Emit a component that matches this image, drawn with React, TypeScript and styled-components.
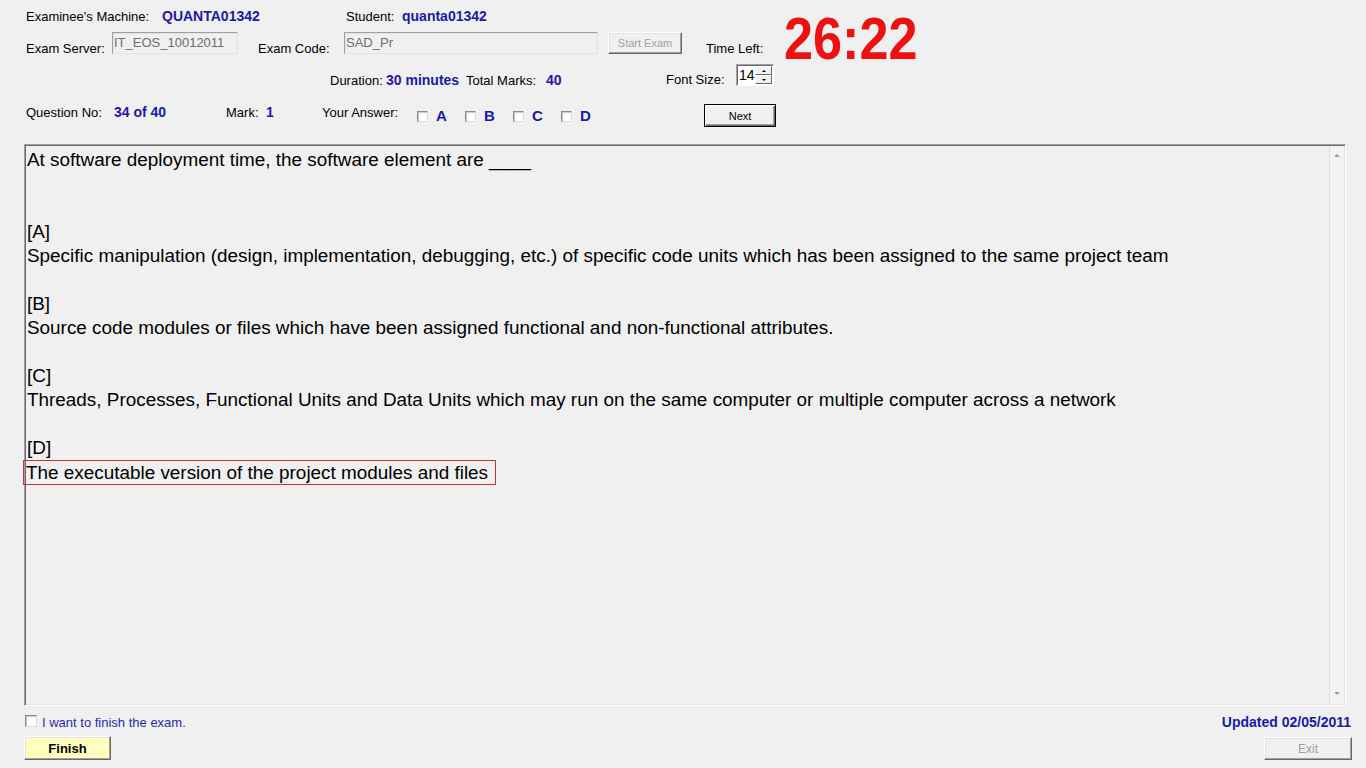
import React from "react";
import styled, { createGlobalStyle } from "styled-components";

const GlobalStyle = createGlobalStyle`
  html, body { margin: 0; padding: 0; background: #f0f0f0; }
  body { font-family: "Liberation Sans", Arial, sans-serif; }
  #root { width: 1366px; height: 768px; }
`;

const BLUE = "#1a1aa8";

const Page = styled.div`
  width: 1366px;
  height: 768px;
  box-sizing: border-box;
  padding: 0 14px 0 24px;
  display: flex;
  flex-direction: column;
  background: #f0f0f0;
  color: #000;
  overflow: hidden;
`;

const TopSection = styled.div`
  display: flex;
  height: 56px;
  padding-left: 2px;
  align-items: flex-start;
`;

const InfoColumn = styled.div`
  display: flex;
  flex-direction: column;
  width: 656px;
  flex: none;
`;

const Row = styled.div<{ $top: number; $h: number; $pl?: number }>`
  display: flex;
  align-items: flex-start;
  margin-top: ${(p) => p.$top}px;
  height: ${(p) => p.$h}px;
  padding-left: ${(p) => p.$pl ?? 0}px;
  flex: none;
`;

const Label = styled.span<{ $w?: number; $mt?: number }>`
  display: block;
  flex: none;
  width: ${(p) => (p.$w ? `${p.$w}px` : "auto")};
  margin-top: ${(p) => p.$mt ?? 0}px;
  font-size: 13px;
  line-height: 15px;
  white-space: nowrap;
  color: #000;
`;

const Value = styled.span<{ $w?: number; $mt?: number }>`
  display: block;
  flex: none;
  width: ${(p) => (p.$w ? `${p.$w}px` : "auto")};
  margin-top: ${(p) => p.$mt ?? 0}px;
  font-size: 14px;
  font-weight: bold;
  line-height: 15px;
  white-space: nowrap;
  color: ${BLUE};
`;

const Spacer = styled.div<{ $w: number }>`
  width: ${(p) => p.$w}px;
  flex: none;
`;

const Field = styled.div<{ $w: number }>`
  box-sizing: border-box;
  width: ${(p) => p.$w}px;
  height: 22px;
  flex: none;
  padding: 2px 2px 0 1px;
  border: 1px solid;
  border-color: #a0a0a0 #e3e3e3 #e3e3e3 #a0a0a0;
  box-shadow: inset 1px 1px #e3e3e3;
  background: #f0f0f0;
  font-size: 13px;
  line-height: 15px;
  color: #6d6d6d;
  white-space: nowrap;
  overflow: hidden;
`;

const WinButton = styled.button<{
  $w: number;
  $h: number;
  $mt?: number;
  $ml?: number;
  $fs?: number;
  $bold?: boolean;
  $bg?: string;
  $default?: boolean;
}>`
  box-sizing: border-box;
  flex: none;
  width: ${(p) => p.$w}px;
  height: ${(p) => p.$h}px;
  margin: ${(p) => p.$mt ?? 0}px 0 0 ${(p) => p.$ml ?? 0}px;
  padding: 0;
  font-family: "Liberation Sans", Arial, sans-serif;
  font-size: ${(p) => p.$fs ?? 11}px;
  font-weight: ${(p) => (p.$bold ? "bold" : "normal")};
  color: ${(p) => (p.disabled ? "#a0a0a0" : "#000")};
  background: ${(p) => p.$bg ?? "#f0f0f0"};
  border: 1px solid;
  border-color: ${(p) =>
    p.$default ? "#000" : "#ffffff #696969 #696969 #ffffff"};
  box-shadow: ${(p) =>
    p.$default
      ? "inset 1px 1px #ffffff, inset -1px -1px #696969, inset -2px -2px #a0a0a0"
      : "inset -1px -1px #a0a0a0, inset 1px 1px #e3e3e3"};
  cursor: default;
`;

const TimeLeftLabel = styled(Label)`
  margin-left: 24px;
  margin-top: 41px;
`;

const Timer = styled.div`
  flex: none;
  width: 133px;
  margin-left: 21px;
  margin-top: 15px;
  font-size: 60px;
  font-weight: bold;
  line-height: 48px;
  color: #ee1111;
  white-space: nowrap;
  transform: scaleX(0.87);
  transform-origin: left top;
`;

const Spinner = styled.div`
  box-sizing: border-box;
  display: flex;
  width: 38px;
  height: 22px;
  flex: none;
  border: 1px solid;
  border-color: #a0a0a0 #ffffff #ffffff #a0a0a0;
  box-shadow: inset 1px 1px #696969;
  background: #ffffff;
`;

const SpinValue = styled.div`
  flex: 1;
  padding: 2px 0 0 2px;
  font-size: 14px;
  line-height: 16px;
  color: #000;
`;

const SpinButtons = styled.div`
  display: flex;
  flex-direction: column;
  width: 17px;
  padding: 1px 1px 1px 0;
`;

const SpinBtn = styled.div`
  flex: 1;
  box-sizing: border-box;
  display: flex;
  align-items: center;
  justify-content: center;
  background: #f0f0f0;
  border: 1px solid;
  border-color: #ffffff #696969 #696969 #ffffff;
`;

const Arrow = styled.span<{ $dir: "up" | "down"; $c?: string; $s?: number }>`
  width: 0;
  height: 0;
  border-left: ${(p) => p.$s ?? 2}px solid transparent;
  border-right: ${(p) => p.$s ?? 2}px solid transparent;
  ${(p) =>
    p.$dir === "up"
      ? `border-bottom: ${p.$s ?? 2}px solid ${p.$c ?? "#000"};`
      : `border-top: ${p.$s ?? 2}px solid ${p.$c ?? "#000"};`}
`;

const Option = styled.div`
  display: flex;
  align-items: center;
  width: 48px;
  height: 18px;
  margin-top: 3px;
  flex: none;
`;

const CheckBox = styled.span<{ $size?: number }>`
  box-sizing: border-box;
  display: block;
  flex: none;
  width: ${(p) => p.$size ?? 11}px;
  height: ${(p) => p.$size ?? 11}px;
  background: #ffffff;
  border: 1px solid;
  border-color: #8a8a8a #dcdcdc #dcdcdc #8a8a8a;
  box-shadow: inset 1px 1px #c8c8c8;
`;

const OptionLetter = styled.span`
  margin-left: 8px;
  font-size: 15px;
  font-weight: bold;
  line-height: 18px;
  color: ${BLUE};
`;

const Panel = styled.div`
  box-sizing: border-box;
  display: flex;
  margin-top: 17px;
  margin-right: 6px;
  height: 562px;
  flex: none;
  border: 1px solid;
  border-color: #a0a0a0 #ffffff #ffffff #a0a0a0;
  box-shadow: inset 1px 1px #696969, inset -1px -1px #e3e3e3;
  background: #f0f0f0;
`;

const Content = styled.div`
  flex: 1;
  padding: 3px 0 0 2px;
  font-size: 18.9px;
  line-height: 24px;
  color: #000;
`;

const Line = styled.div`
  height: 24px;
  white-space: nowrap;
`;

const Highlight = styled.span`
  display: inline-block;
  box-sizing: border-box;
  height: 25px;
  line-height: 23px;
  margin-left: -4px;
  margin-top: 0;
  padding: 0 7px 0 2px;
  border: 1px solid #c83232;
  vertical-align: top;
`;

const ScrollBar = styled.div`
  width: 14px;
  flex: none;
  margin: 1px 1px 1px 0;
  display: flex;
  flex-direction: column;
  justify-content: space-between;
  align-items: center;
  border-left: 1px solid #dcdcdc;
  background: #f3f3f3;
  padding: 8px 0 9px;
`;

const BottomRow = styled.div`
  display: flex;
  align-items: flex-start;
  margin-top: 9px;
  height: 15px;
  flex: none;
`;

const FinishCheck = styled.div`
  display: flex;
  align-items: flex-start;
  margin-left: 1px;
`;

const FinishLabel = styled.span`
  margin-left: 5px;
  font-size: 13px;
  line-height: 15px;
  color: #2a2ab0;
`;

const Updated = styled.span`
  margin-left: auto;
  margin-right: 1px;
  font-size: 14px;
  font-weight: bold;
  line-height: 15px;
  color: ${BLUE};
`;

const ButtonRow = styled.div`
  display: flex;
  justify-content: space-between;
  align-items: flex-start;
  margin-top: 6px;
  flex: none;
`;

const lines: string[] = [
  "At software deployment time, the software element are ____",
  "",
  "",
  "[A]",
  "Specific manipulation (design, implementation, debugging, etc.) of specific code units which has been assigned to the same project team",
  "",
  "[B]",
  "Source code modules or files which have been assigned functional and non-functional attributes.",
  "",
  "[C]",
  "Threads, Processes, Functional Units and Data Units which may run on the same computer or multiple computer across a network",
  "",
  "[D]",
];

export default function App() {
  return (
    <>
      <GlobalStyle />
      <Page>
        <TopSection>
          <InfoColumn>
            <Row $top={9} $h={15}>
              <Label $w={136}>Examinee's Machine:</Label>
              <Value $w={184}>QUANTA01342</Value>
              <Label $w={56}>Student:</Label>
              <Value>quanta01342</Value>
            </Row>
            <Row $top={8} $h={24}>
              <Label $w={86} $mt={9}>
                Exam Server:
              </Label>
              <Field $w={126}>IT_EOS_10012011</Field>
              <Spacer $w={20} />
              <Label $w={86} $mt={9}>
                Exam Code:
              </Label>
              <Field $w={254}>SAD_Pr</Field>
              <WinButton $w={74} $h={22} $ml={10} disabled>
                Start Exam
              </WinButton>
            </Row>
          </InfoColumn>
          <TimeLeftLabel>Time Left:</TimeLeftLabel>
          <Timer>26:22</Timer>
        </TopSection>

        <Row $top={8} $h={24} $pl={306}>
          <Label $w={56} $mt={9}>
            Duration:
          </Label>
          <Value $w={80} $mt={9}>
            30 minutes
          </Value>
          <Label $w={80} $mt={9}>
            Total Marks:
          </Label>
          <Value $w={120} $mt={9}>
            40
          </Value>
          <Label $w={70} $mt={8}>
            Font Size:
          </Label>
          <Spinner>
            <SpinValue>14</SpinValue>
            <SpinButtons>
              <SpinBtn>
                <Arrow $dir="up" />
              </SpinBtn>
              <SpinBtn>
                <Arrow $dir="down" />
              </SpinBtn>
            </SpinButtons>
          </Spinner>
        </Row>

        <Row $top={16} $h={23} $pl={2}>
          <Label $w={88} $mt={1}>
            Question No:
          </Label>
          <Value $w={112} $mt={1}>
            34 of 40
          </Value>
          <Label $w={40} $mt={1}>
            Mark:
          </Label>
          <Value $w={56} $mt={1}>
            1
          </Value>
          <Label $w={95} $mt={1}>
            Your Answer:
          </Label>
          {["A", "B", "C", "D"].map((l) => (
            <Option key={l}>
              <CheckBox />
              <OptionLetter>{l}</OptionLetter>
            </Option>
          ))}
          <WinButton $w={72} $h={23} $ml={95} $default>
            Next
          </WinButton>
        </Row>

        <Panel>
          <Content>
            {lines.map((t, i) => (
              <Line key={i}>{t}</Line>
            ))}
            <Line>
              <Highlight>The executable version of the project modules and files</Highlight>
            </Line>
          </Content>
          <ScrollBar>
            <Arrow $dir="up" $c="#a0a0a0" $s={3} />
            <Arrow $dir="down" $c="#a0a0a0" $s={3} />
          </ScrollBar>
        </Panel>

        <BottomRow>
          <FinishCheck>
            <CheckBox $size={12} />
            <FinishLabel>I want to finish the exam.</FinishLabel>
          </FinishCheck>
          <Updated>Updated 02/05/2011</Updated>
        </BottomRow>

        <ButtonRow>
          <WinButton $w={87} $h={24} $fs={13} $bold $bg="#ffffc0">
            Finish
          </WinButton>
          <WinButton $w={88} $h={23} $mt={1} $fs={12} disabled>
            Exit
          </WinButton>
        </ButtonRow>
      </Page>
    </>
  );
}
